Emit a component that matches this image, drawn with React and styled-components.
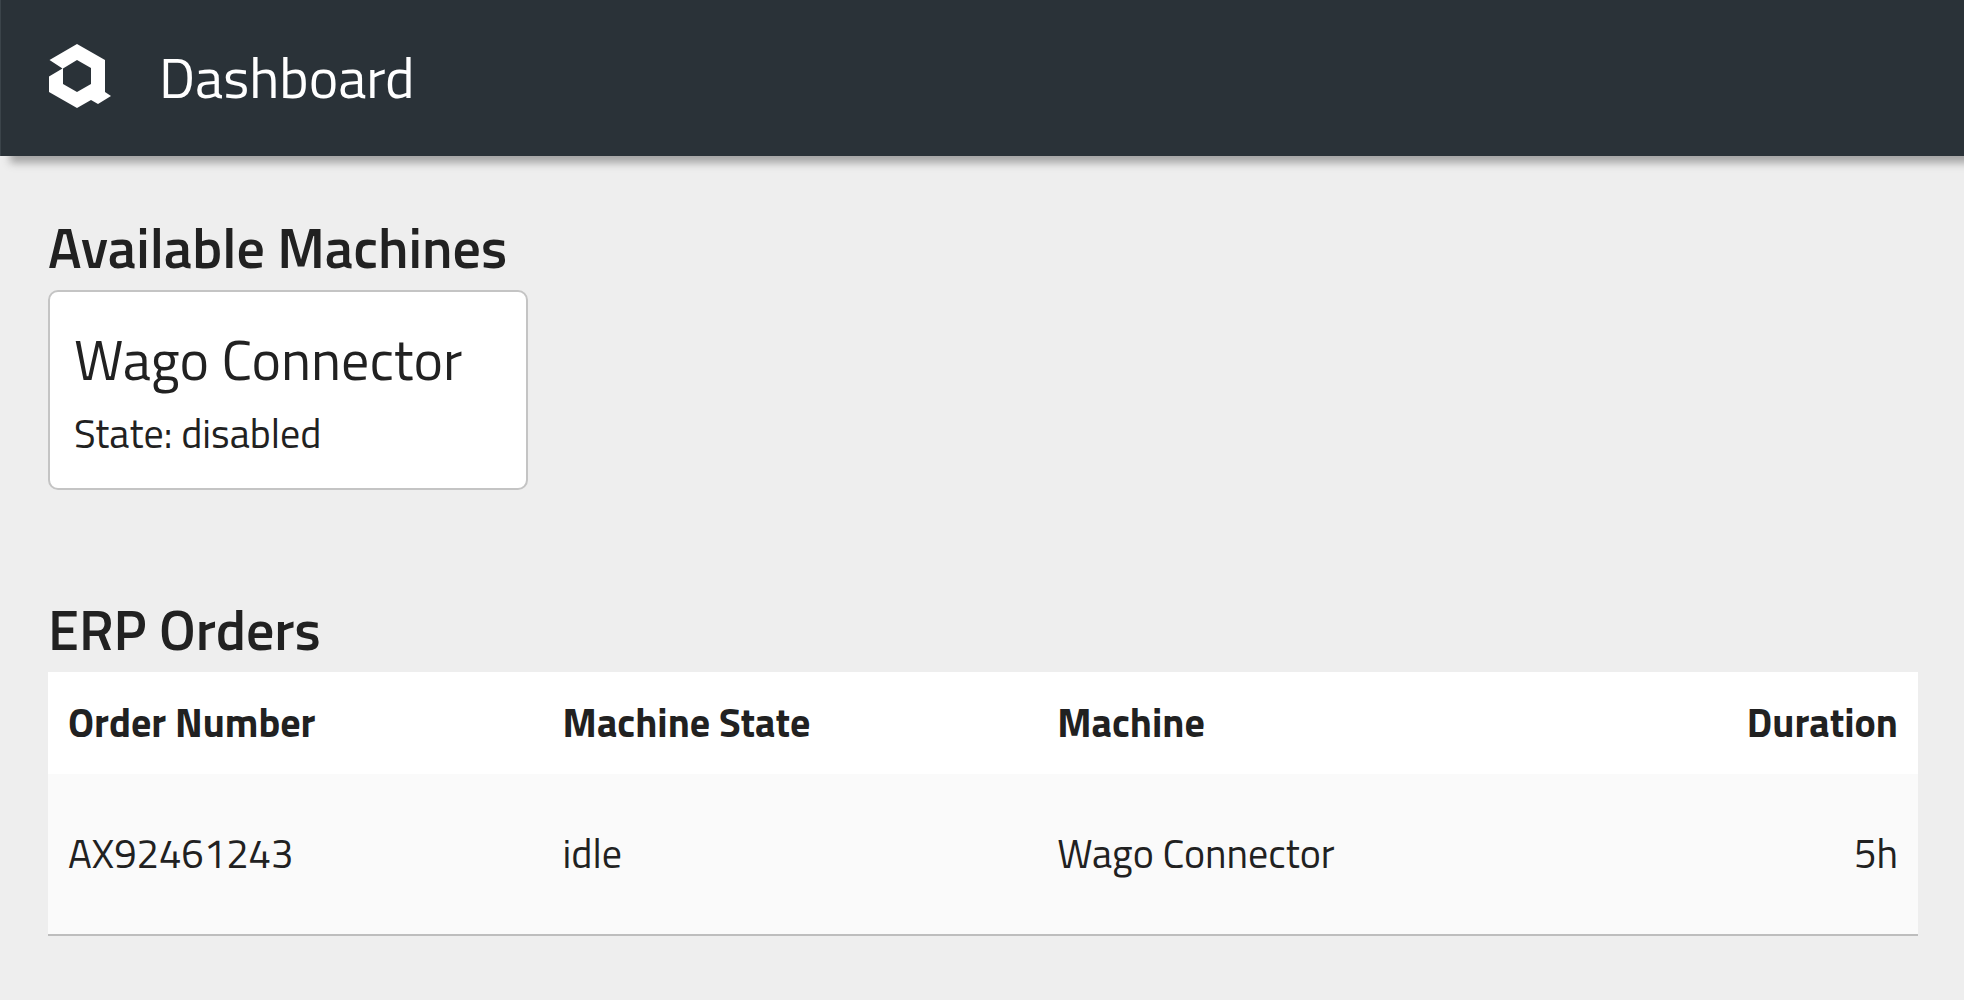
import React from "react";
import styled, { createGlobalStyle } from "styled-components";

const GlobalStyle = createGlobalStyle`
  *, *::before, *::after { box-sizing: border-box; }
  body {
    margin: 0;
    background: #eeeeee;
    color: #212121;
    font-family: "Titillium Web", Roboto, "Liberation Sans", sans-serif;
    font-size: 40px;
    line-height: 60px;
  }
`;

const Header = styled.header`
  display: flex;
  align-items: center;
  gap: 46px;
  height: 156px;
  padding: 0 48px;
  border-left: 1px solid #3b444a;
  background: #2a3238;
  color: #ffffff;
  box-shadow: 10px 7px 8px #a4a4a4;
`;

const Logo = styled.svg`
  display: block;
  flex: none;
  width: 64px;
  height: 68px;
`;

const Title = styled.h1`
  margin: 0;
  font-size: 56px;
  font-weight: 400;
  line-height: 84px;
`;

const Main = styled.main`
  display: flex;
  flex-direction: column;
  gap: 98px;
  padding: 50px 46px 48px 48px;
`;

const SectionTitle = styled.h2`
  margin: 0;
  font-size: 56px;
  font-weight: 600;
  line-height: 84px;
`;

const MachineCard = styled.article`
  width: 480px;
  max-width: 100%;
  padding: 26px 24px 22px;
  border: 2px solid #c4c4c4;
  border-radius: 10px;
  background: #ffffff;
`;

const MachineName = styled.h3`
  margin: 0;
  font-size: 56px;
  font-weight: 400;
  line-height: 84px;
`;

const MachineState = styled.p`
  margin: 0;
  line-height: 64px;
`;

const OrderTable = styled.table`
  width: 100%;
  table-layout: fixed;
  border-collapse: separate;
  border-spacing: 0;
  background: #ffffff;
`;

const HeadCell = styled.th`
  width: ${(p) => p.$width || "auto"};
  height: 102px;
  padding: 0 20px;
  font-weight: 700;
  text-align: ${(p) => p.$align || "left"};
`;

const Cell = styled.td`
  height: 162px;
  padding: 0 20px;
  border-bottom: 2px solid #bdbdbd;
  background: #fafafa;
  text-align: ${(p) => p.$align || "left"};
`;

const columns = [
  { key: "number", label: "Order Number", width: "26.45%" },
  { key: "state", label: "Machine State", width: "26.45%" },
  { key: "machine", label: "Machine", width: "26.45%" },
  { key: "duration", label: "Duration", align: "right" },
];

const orders = [
  { number: "AX92461243", state: "idle", machine: "Wago Connector", duration: "5h" },
];

const machines = [{ name: "Wago Connector", state: "disabled" }];

export default function App() {
  return (
    <>
      <GlobalStyle />
      <Header>
        <Logo viewBox="0 0 64 68" fill="#ffffff" aria-hidden="true">
          <path
            fillRule="evenodd"
            d="M0.5 16 L28 0 L56 16 V48 L62 52 L49 60 L42 56 L28 64 L0 48 V32.5 L13.5 24.5 Z M28 16 L14 24.5 V40 L28 48 L42 40 V24 Z"
          />
        </Logo>
        <Title>Dashboard</Title>
      </Header>
      <Main>
        <section>
          <SectionTitle>Available Machines</SectionTitle>
          {machines.map((machine) => (
            <MachineCard key={machine.name}>
              <MachineName>{machine.name}</MachineName>
              <MachineState>State: {machine.state}</MachineState>
            </MachineCard>
          ))}
        </section>
        <section>
          <SectionTitle>ERP Orders</SectionTitle>
          <OrderTable>
            <thead>
              <tr>
                {columns.map((c) => (
                  <HeadCell key={c.key} scope="col" $width={c.width} $align={c.align}>
                    {c.label}
                  </HeadCell>
                ))}
              </tr>
            </thead>
            <tbody>
              {orders.map((order) => (
                <tr key={order.number}>
                  {columns.map((c) => (
                    <Cell key={c.key} $align={c.align}>
                      {order[c.key]}
                    </Cell>
                  ))}
                </tr>
              ))}
            </tbody>
          </OrderTable>
        </section>
      </Main>
    </>
  );
}
